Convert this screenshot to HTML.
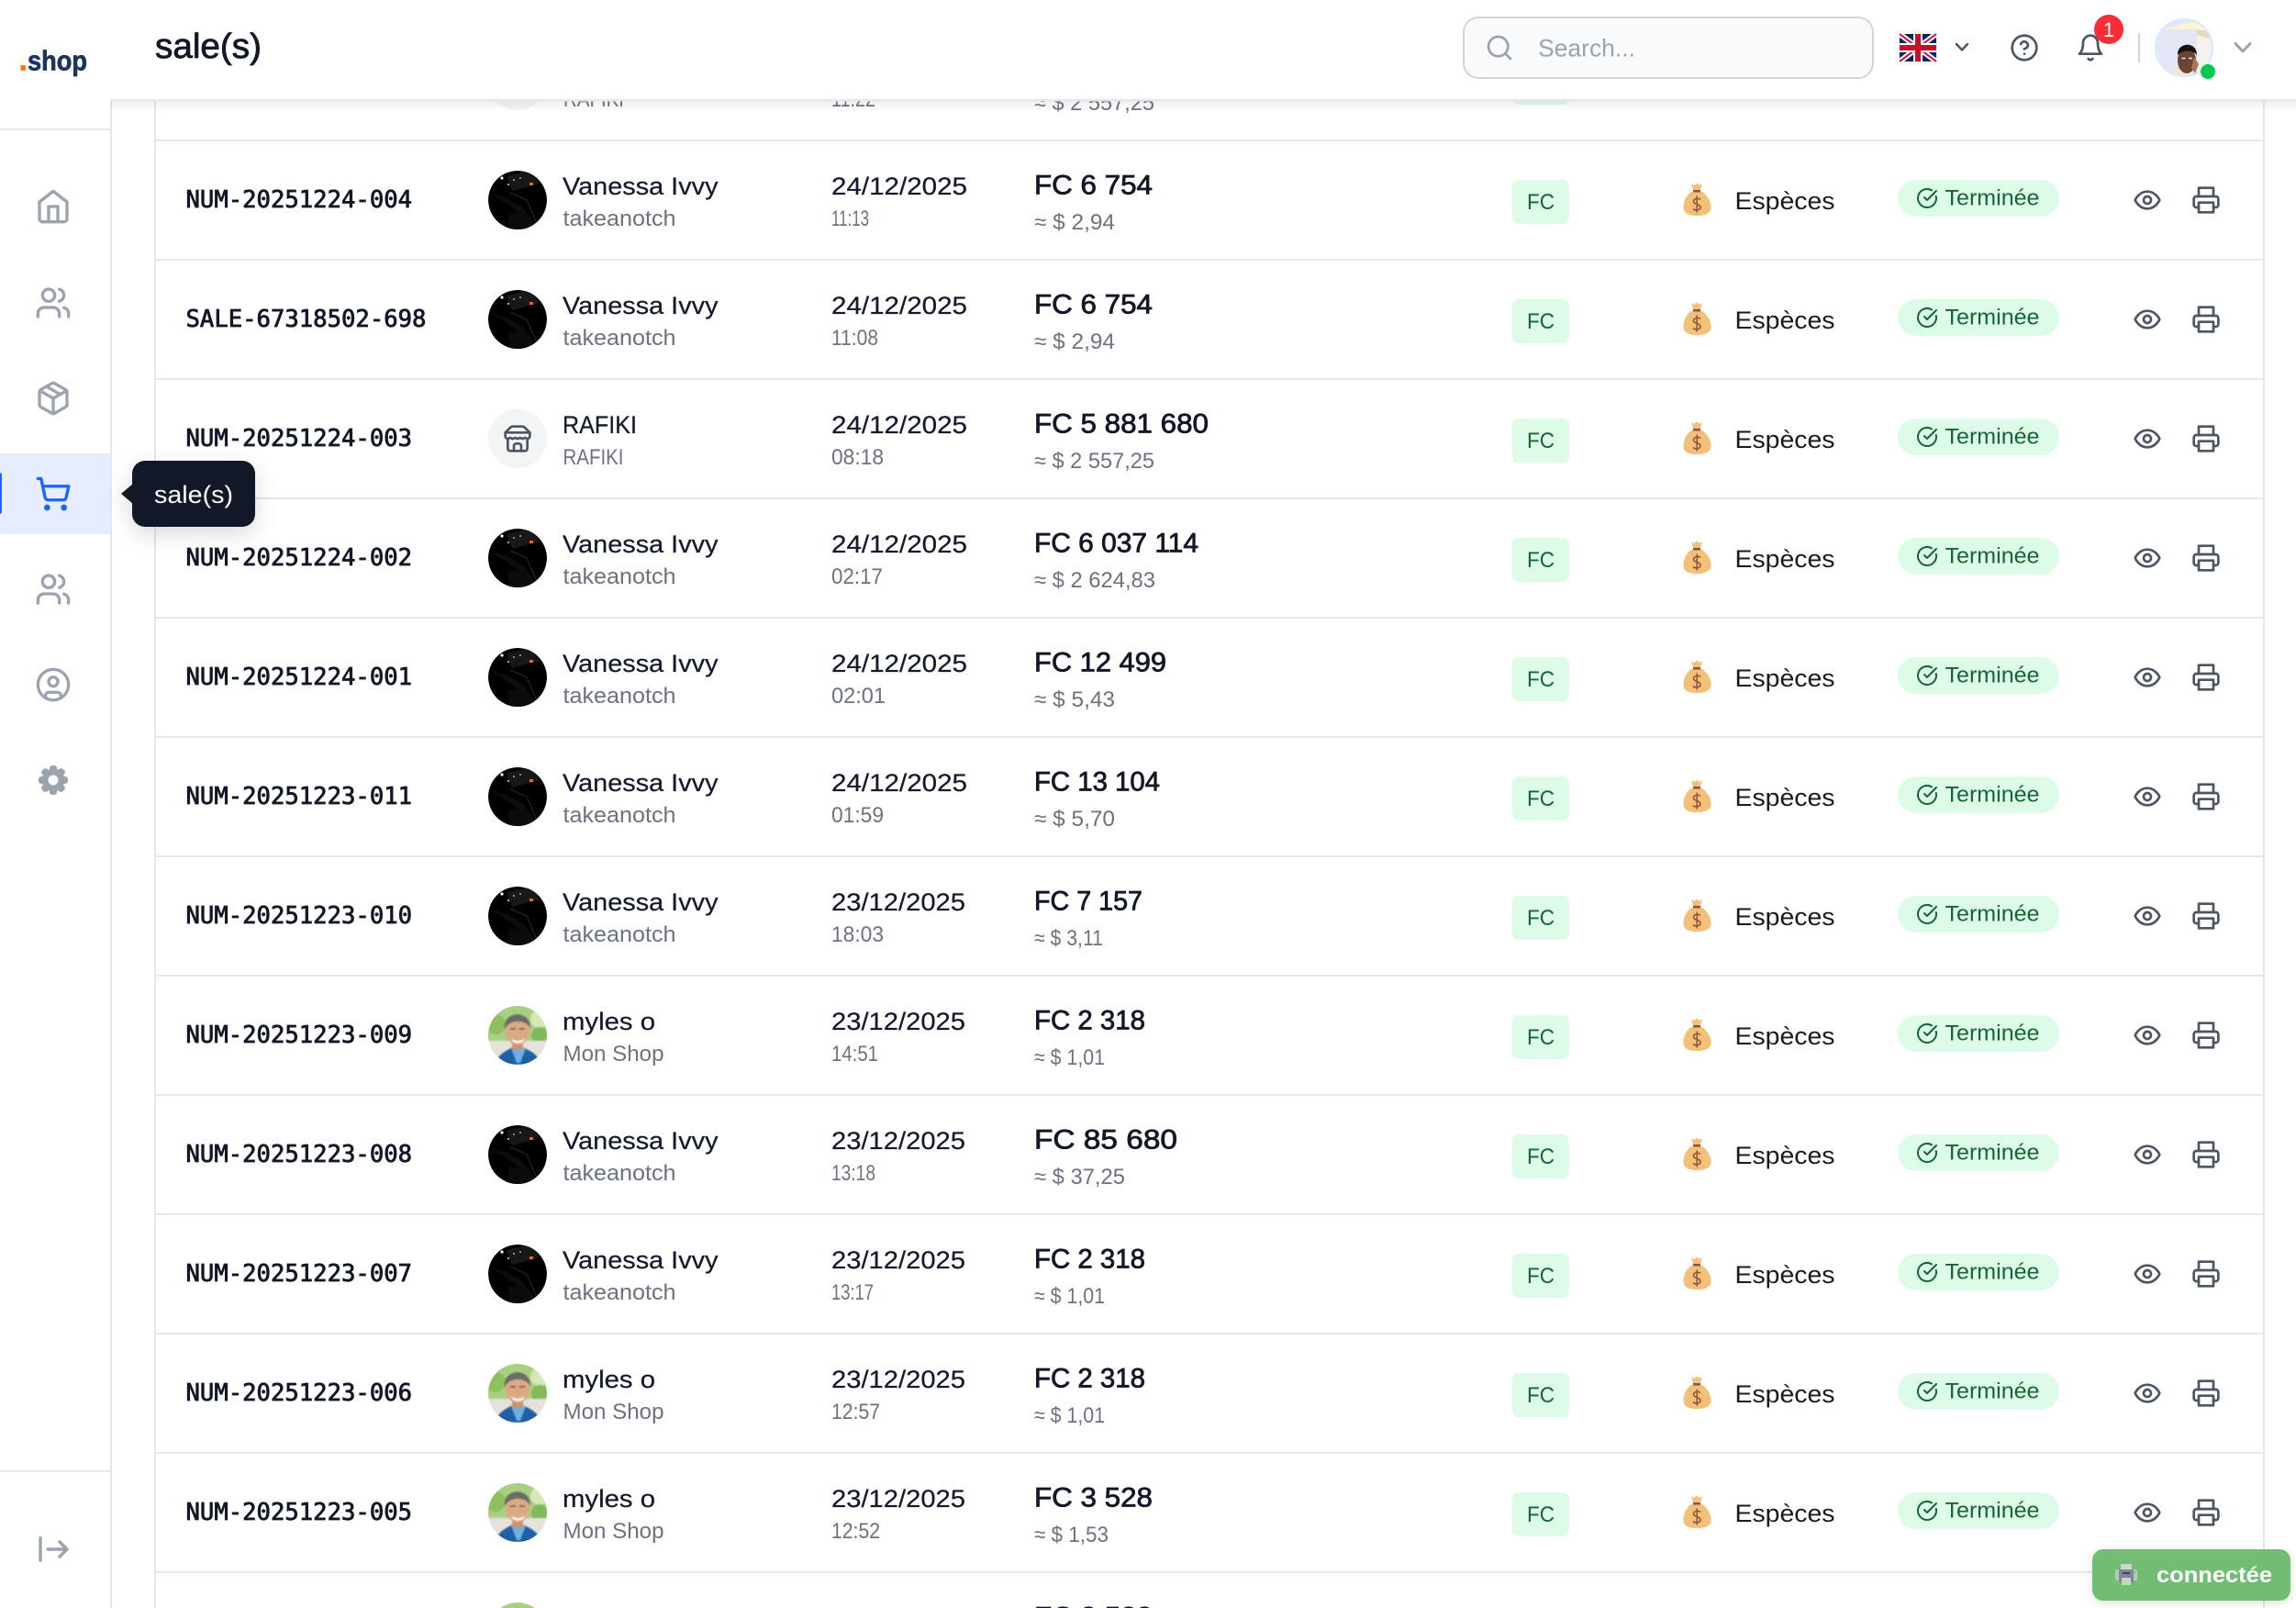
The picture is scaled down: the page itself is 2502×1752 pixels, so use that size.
<!DOCTYPE html>
<html lang="fr"><head><meta charset="utf-8"><title>sale(s)</title>
<style>
html,body{margin:0;padding:0;background:#fff;width:2502px;height:1752px;overflow:hidden}
svg{display:block}
text{font-family:"Liberation Sans",Arial,sans-serif;white-space:pre}
.id{font-family:"DejaVu Sans Mono","Liberation Mono",monospace;font-size:25.6px;fill:#111827;stroke:#111827;stroke-width:.8px}
.n{font-size:27px;fill:#141b2c;stroke:#141b2c;stroke-width:.25px}
.s{font-size:24px;fill:#6b7280}
.a{font-size:30px;fill:#111827;stroke:#111827;stroke-width:.8px}
.fc{font-size:24px;fill:#166534}
.e{font-size:27px;fill:#1a1a1a}
.t{font-size:24px;fill:#166534}
.ln{stroke-linecap:round;stroke-linejoin:round;fill:none}
</style></head><body>
<svg xmlns="http://www.w3.org/2000/svg" width="2502" height="1752" viewBox="0 0 2502 1752">
<defs>
<linearGradient id="hs" x1="0" y1="0" x2="0" y2="1"><stop offset="0" stop-color="#000" stop-opacity=".06"/><stop offset="1" stop-color="#000" stop-opacity="0"/></linearGradient>
<clipPath id="c32"><circle cx="0" cy="0" r="32"/></clipPath>
<clipPath id="cme"><circle cx="2380" cy="52" r="30"/></clipPath>
<g id="eye" class="ln" stroke="#4b5563" stroke-width="2"><path d="M2 12s3-7 10-7 10 7 10 7-3 7-10 7-10-7-10-7Z"/><circle cx="12" cy="12" r="3"/></g>
<g id="prn" class="ln" stroke="#4b5563" stroke-width="2"><path d="M6 9V2h12v7"/><path d="M6 18H4a2 2 0 0 1-2-2v-5a2 2 0 0 1 2-2h16a2 2 0 0 1 2 2v5a2 2 0 0 1-2 2h-2"/><rect x="6" y="14" width="12" height="8"/></g>
<g id="users" class="ln" stroke="#9ca3af" stroke-width="2"><path d="M16 21v-2a4 4 0 0 0-4-4H6a4 4 0 0 0-4 4v2"/><circle cx="9" cy="7" r="4"/><path d="M22 21v-2a4 4 0 0 0-3-3.87"/><path d="M16 3.13a4 4 0 0 1 0 7.75"/></g>
<g id="av-v" clip-path="url(#c32)">
<circle r="32" fill="#000"/>
<path d="M-30 -8L-12 -2L6 8L20 28L24 32L6 32L2 14L-12 4Z" fill="#0d0d0e"/>
<path d="M-12 -26L14 -32L24 -18L-6 -10Z" fill="#18181b"/>
<rect x="-10" y="14" width="20" height="18" fill="#0b0b0d"/>
<circle cx="-17" cy="-24" r="1.600" fill="#fff"/><circle cx="-10" cy="-17" r="1" fill="#ddd"/><circle cx="-4" cy="-22" r="1" fill="#aaa"/><circle cx="3" cy="-24" r="1" fill="#aaa"/>
<rect x="13" y="-19" width="4" height="3" fill="#f5610c"/>
<path d="M-8 -8L10 0L22 28" stroke="#2b2b2e" stroke-width="1" fill="none"/>
</g>
<g id="av-m" clip-path="url(#c32)"><g style="filter:blur(.7px)">
<circle r="33" fill="#a8cf82"/>
<circle cx="-24" cy="-12" r="11" fill="#8fc05f"/>
<circle cx="24" cy="-18" r="10" fill="#d5e8b8"/>
<circle cx="24" cy="0" r="9" fill="#82b95c"/>
<rect x="-32" y="6" width="64" height="26" fill="#e4e2da"/>
<path d="M-24 32C-22 21 -13 17 -5 13L5 13C14 17 22 20 26 32Z" fill="#1f5fa5"/>
<path d="M-7 14L-1 30L3 30L9 14Z" fill="#6cb0e0"/>
<rect x="-6" y="4" width="12" height="12" fill="#c99474"/>
<ellipse cx="0" cy="-5" rx="13" ry="15.500" fill="#dba985"/>
<path d="M-14 -7C-17 -27 15 -29 14 -7C11 -17 -8 -19 -14 -7Z" fill="#6c6c66"/>
<path d="M-8 -7H-2M2 -7H8" stroke="#6a4a38" stroke-width="1.300"/>
<path d="M-7 3C-3 7 4 7 8 3L6 7C3 9 -2 9 -5 7Z" fill="#fff"/>
</g></g>
<g id="av-s"><circle r="32" fill="#f3f4f6"/><g transform="translate(-16,-16) scale(1.333)" class="ln" stroke="#4b5563" stroke-width="2"><path d="m2 7 4.41-4.41A2 2 0 0 1 7.83 2h8.34a2 2 0 0 1 1.42.59L22 7"/><path d="M4 12v8a2 2 0 0 0 2 2h12a2 2 0 0 0 2-2v-8"/><path d="M15 22v-4a2 2 0 0 0-2-2h-2a2 2 0 0 0-2 2v4"/><path d="M2 7h20"/><path d="M22 7v3a2 2 0 0 1-2 2a2.7 2.7 0 0 1-1.59-.63.7.7 0 0 0-.82 0A2.7 2.7 0 0 1 16 12a2.7 2.7 0 0 1-1.59-.63.7.7 0 0 0-.82 0A2.7 2.7 0 0 1 12 12a2.7 2.7 0 0 1-1.59-.63.7.7 0 0 0-.82 0A2.7 2.7 0 0 1 8 12a2.7 2.7 0 0 1-1.59-.63.7.7 0 0 0-.82 0A2.7 2.7 0 0 1 4 12a2 2 0 0 1-2-2V7"/></g></g>
<g id="cells">
<rect x="1648" y="43" width="62" height="48" rx="7" fill="#dcfce7"/>
<path d="M1843 56C1836 61 1834.500 68 1834.500 73C1834.500 79 1839 82 1849 82C1859 82 1864.500 79 1864.500 73C1864.500 68 1862 61 1855 56Z" fill="#f4bf77"/>
<path d="M1843 47L1846 49L1849 46.500L1852 49L1855 47L1853 54L1845 54Z" fill="#f4bf77"/>
<rect x="1845" y="54" width="8" height="2.500" fill="#8a5540"/>
<path d="M1853 64.500C1851.500 62.800 1845.500 62.800 1845.500 66.500C1845.500 70 1853 69 1853 73C1853 76.500 1846.500 76.500 1845 74.500M1849.200 60.500V78.500" fill="none" stroke="#8a5540" stroke-width="1.500"/>
<rect x="2068" y="43" width="176" height="40" rx="20" fill="#dcfce7"/>
<g transform="translate(2088,51)" class="ln" stroke="#166534" stroke-width="2"><path d="M21.801 10A10 10 0 1 1 17 3.335"/><path d="m9 11 3 3L22 4"/></g>
<use href="#eye" transform="translate(2324,49) scale(1.333)"/>
<use href="#prn" transform="translate(2388,49) scale(1.333)"/>
</g>
</defs>

<rect width="2502" height="1752" fill="#fff"/>

<!-- table frame -->
<rect x="168" y="100" width="2" height="1652" fill="#e5e7eb"/>
<rect x="2466" y="100" width="2" height="1652" fill="#e5e7eb"/>
<g fill="#e5e7eb">
<rect x="170" y="152" width="2296" height="2"/><rect x="170" y="282" width="2296" height="2"/><rect x="170" y="412" width="2296" height="2"/><rect x="170" y="542" width="2296" height="2"/><rect x="170" y="672" width="2296" height="2"/><rect x="170" y="802" width="2296" height="2"/><rect x="170" y="932" width="2296" height="2"/><rect x="170" y="1062" width="2296" height="2"/><rect x="170" y="1192" width="2296" height="2"/><rect x="170" y="1322" width="2296" height="2"/><rect x="170" y="1452" width="2296" height="2"/><rect x="170" y="1582" width="2296" height="2"/><rect x="170" y="1712" width="2296" height="2"/>
</g>

<!-- rows -->
<g transform="translate(0,23)"><use href="#av-s" x="564" y="65"/><text class="s" x="614" y="93" textLength="66" lengthAdjust="spacingAndGlyphs">RAFIKI</text><text class="s" x="906" y="93" textLength="48" lengthAdjust="spacingAndGlyphs">11:22</text><text class="s" x="1127" y="97" textLength="131" lengthAdjust="spacingAndGlyphs">≈ $ 2 557,25</text><use href="#cells"/></g>

<g transform="translate(0,153)"><text class="id" x="202.500" y="73">NUM-20251224-004</text><use href="#av-v" x="564" y="65"/><text class="n" x="613" y="59" textLength="169.500" lengthAdjust="spacingAndGlyphs">Vanessa Ivvy</text><text class="s" x="613.500" y="93" textLength="123" lengthAdjust="spacingAndGlyphs">takeanotch</text><text class="n" x="906" y="59" textLength="148" lengthAdjust="spacingAndGlyphs">24/12/2025</text><text class="s" x="906" y="93" textLength="41" lengthAdjust="spacingAndGlyphs">11:13</text><text class="a" x="1127" y="58.500" textLength="129" lengthAdjust="spacingAndGlyphs">FC 6 754</text><text class="s" x="1127" y="97" textLength="88" lengthAdjust="spacingAndGlyphs">≈ $ 2,94</text><use href="#cells"/><text class="fc" x="1664" y="75" textLength="30" lengthAdjust="spacingAndGlyphs">FC</text><text class="e" x="1890.500" y="75" textLength="109" lengthAdjust="spacingAndGlyphs">Espèces</text><text class="t" x="2119.500" y="70.500" textLength="103" lengthAdjust="spacingAndGlyphs">Terminée</text></g>

<g transform="translate(0,283)"><text class="id" x="202.500" y="73">SALE-67318502-698</text><use href="#av-v" x="564" y="65"/><text class="n" x="613" y="59" textLength="169.500" lengthAdjust="spacingAndGlyphs">Vanessa Ivvy</text><text class="s" x="613.500" y="93" textLength="123" lengthAdjust="spacingAndGlyphs">takeanotch</text><text class="n" x="906" y="59" textLength="148" lengthAdjust="spacingAndGlyphs">24/12/2025</text><text class="s" x="906" y="93" textLength="51" lengthAdjust="spacingAndGlyphs">11:08</text><text class="a" x="1127" y="58.500" textLength="129" lengthAdjust="spacingAndGlyphs">FC 6 754</text><text class="s" x="1127" y="97" textLength="88" lengthAdjust="spacingAndGlyphs">≈ $ 2,94</text><use href="#cells"/><text class="fc" x="1664" y="75" textLength="30" lengthAdjust="spacingAndGlyphs">FC</text><text class="e" x="1890.500" y="75" textLength="109" lengthAdjust="spacingAndGlyphs">Espèces</text><text class="t" x="2119.500" y="70.500" textLength="103" lengthAdjust="spacingAndGlyphs">Terminée</text></g>

<g transform="translate(0,413)"><text class="id" x="202.500" y="73">NUM-20251224-003</text><use href="#av-s" x="564" y="65"/><text class="n" x="613" y="59" textLength="81" lengthAdjust="spacingAndGlyphs">RAFIKI</text><text class="s" x="613.500" y="93" textLength="66" lengthAdjust="spacingAndGlyphs">RAFIKI</text><text class="n" x="906" y="59" textLength="148" lengthAdjust="spacingAndGlyphs">24/12/2025</text><text class="s" x="906" y="93" textLength="57" lengthAdjust="spacingAndGlyphs">08:18</text><text class="a" x="1127" y="58.500" textLength="190" lengthAdjust="spacingAndGlyphs">FC 5 881 680</text><text class="s" x="1127" y="97" textLength="131" lengthAdjust="spacingAndGlyphs">≈ $ 2 557,25</text><use href="#cells"/><text class="fc" x="1664" y="75" textLength="30" lengthAdjust="spacingAndGlyphs">FC</text><text class="e" x="1890.500" y="75" textLength="109" lengthAdjust="spacingAndGlyphs">Espèces</text><text class="t" x="2119.500" y="70.500" textLength="103" lengthAdjust="spacingAndGlyphs">Terminée</text></g>

<g transform="translate(0,543)"><text class="id" x="202.500" y="73">NUM-20251224-002</text><use href="#av-v" x="564" y="65"/><text class="n" x="613" y="59" textLength="169.500" lengthAdjust="spacingAndGlyphs">Vanessa Ivvy</text><text class="s" x="613.500" y="93" textLength="123" lengthAdjust="spacingAndGlyphs">takeanotch</text><text class="n" x="906" y="59" textLength="148" lengthAdjust="spacingAndGlyphs">24/12/2025</text><text class="s" x="906" y="93" textLength="56" lengthAdjust="spacingAndGlyphs">02:17</text><text class="a" x="1127" y="58.500" textLength="179" lengthAdjust="spacingAndGlyphs">FC 6 037 114</text><text class="s" x="1127" y="97" textLength="132" lengthAdjust="spacingAndGlyphs">≈ $ 2 624,83</text><use href="#cells"/><text class="fc" x="1664" y="75" textLength="30" lengthAdjust="spacingAndGlyphs">FC</text><text class="e" x="1890.500" y="75" textLength="109" lengthAdjust="spacingAndGlyphs">Espèces</text><text class="t" x="2119.500" y="70.500" textLength="103" lengthAdjust="spacingAndGlyphs">Terminée</text></g>

<g transform="translate(0,673)"><text class="id" x="202.500" y="73">NUM-20251224-001</text><use href="#av-v" x="564" y="65"/><text class="n" x="613" y="59" textLength="169.500" lengthAdjust="spacingAndGlyphs">Vanessa Ivvy</text><text class="s" x="613.500" y="93" textLength="123" lengthAdjust="spacingAndGlyphs">takeanotch</text><text class="n" x="906" y="59" textLength="148" lengthAdjust="spacingAndGlyphs">24/12/2025</text><text class="s" x="906" y="93" textLength="59" lengthAdjust="spacingAndGlyphs">02:01</text><text class="a" x="1127" y="58.500" textLength="144" lengthAdjust="spacingAndGlyphs">FC 12 499</text><text class="s" x="1127" y="97" textLength="88" lengthAdjust="spacingAndGlyphs">≈ $ 5,43</text><use href="#cells"/><text class="fc" x="1664" y="75" textLength="30" lengthAdjust="spacingAndGlyphs">FC</text><text class="e" x="1890.500" y="75" textLength="109" lengthAdjust="spacingAndGlyphs">Espèces</text><text class="t" x="2119.500" y="70.500" textLength="103" lengthAdjust="spacingAndGlyphs">Terminée</text></g>

<g transform="translate(0,803)"><text class="id" x="202.500" y="73">NUM-20251223-011</text><use href="#av-v" x="564" y="65"/><text class="n" x="613" y="59" textLength="169.500" lengthAdjust="spacingAndGlyphs">Vanessa Ivvy</text><text class="s" x="613.500" y="93" textLength="123" lengthAdjust="spacingAndGlyphs">takeanotch</text><text class="n" x="906" y="59" textLength="148" lengthAdjust="spacingAndGlyphs">24/12/2025</text><text class="s" x="906" y="93" textLength="57" lengthAdjust="spacingAndGlyphs">01:59</text><text class="a" x="1127" y="58.500" textLength="137" lengthAdjust="spacingAndGlyphs">FC 13 104</text><text class="s" x="1127" y="97" textLength="88" lengthAdjust="spacingAndGlyphs">≈ $ 5,70</text><use href="#cells"/><text class="fc" x="1664" y="75" textLength="30" lengthAdjust="spacingAndGlyphs">FC</text><text class="e" x="1890.500" y="75" textLength="109" lengthAdjust="spacingAndGlyphs">Espèces</text><text class="t" x="2119.500" y="70.500" textLength="103" lengthAdjust="spacingAndGlyphs">Terminée</text></g>

<g transform="translate(0,933)"><text class="id" x="202.500" y="73">NUM-20251223-010</text><use href="#av-v" x="564" y="65"/><text class="n" x="613" y="59" textLength="169.500" lengthAdjust="spacingAndGlyphs">Vanessa Ivvy</text><text class="s" x="613.500" y="93" textLength="123" lengthAdjust="spacingAndGlyphs">takeanotch</text><text class="n" x="906" y="59" textLength="146" lengthAdjust="spacingAndGlyphs">23/12/2025</text><text class="s" x="906" y="93" textLength="57" lengthAdjust="spacingAndGlyphs">18:03</text><text class="a" x="1127" y="58.500" textLength="118" lengthAdjust="spacingAndGlyphs">FC 7 157</text><text class="s" x="1127" y="97" textLength="75" lengthAdjust="spacingAndGlyphs">≈ $ 3,11</text><use href="#cells"/><text class="fc" x="1664" y="75" textLength="30" lengthAdjust="spacingAndGlyphs">FC</text><text class="e" x="1890.500" y="75" textLength="109" lengthAdjust="spacingAndGlyphs">Espèces</text><text class="t" x="2119.500" y="70.500" textLength="103" lengthAdjust="spacingAndGlyphs">Terminée</text></g>

<g transform="translate(0,1063)"><text class="id" x="202.500" y="73">NUM-20251223-009</text><use href="#av-m" x="564" y="65"/><text class="n" x="613" y="59" textLength="101" lengthAdjust="spacingAndGlyphs">myles o</text><text class="s" x="613.500" y="93" textLength="110" lengthAdjust="spacingAndGlyphs">Mon Shop</text><text class="n" x="906" y="59" textLength="146" lengthAdjust="spacingAndGlyphs">23/12/2025</text><text class="s" x="906" y="93" textLength="51" lengthAdjust="spacingAndGlyphs">14:51</text><text class="a" x="1127" y="58.500" textLength="121" lengthAdjust="spacingAndGlyphs">FC 2 318</text><text class="s" x="1127" y="97" textLength="77" lengthAdjust="spacingAndGlyphs">≈ $ 1,01</text><use href="#cells"/><text class="fc" x="1664" y="75" textLength="30" lengthAdjust="spacingAndGlyphs">FC</text><text class="e" x="1890.500" y="75" textLength="109" lengthAdjust="spacingAndGlyphs">Espèces</text><text class="t" x="2119.500" y="70.500" textLength="103" lengthAdjust="spacingAndGlyphs">Terminée</text></g>

<g transform="translate(0,1193)"><text class="id" x="202.500" y="73">NUM-20251223-008</text><use href="#av-v" x="564" y="65"/><text class="n" x="613" y="59" textLength="169.500" lengthAdjust="spacingAndGlyphs">Vanessa Ivvy</text><text class="s" x="613.500" y="93" textLength="123" lengthAdjust="spacingAndGlyphs">takeanotch</text><text class="n" x="906" y="59" textLength="146" lengthAdjust="spacingAndGlyphs">23/12/2025</text><text class="s" x="906" y="93" textLength="48" lengthAdjust="spacingAndGlyphs">13:18</text><text class="a" x="1127" y="58.500" textLength="156" lengthAdjust="spacingAndGlyphs">FC 85 680</text><text class="s" x="1127" y="97" textLength="99" lengthAdjust="spacingAndGlyphs">≈ $ 37,25</text><use href="#cells"/><text class="fc" x="1664" y="75" textLength="30" lengthAdjust="spacingAndGlyphs">FC</text><text class="e" x="1890.500" y="75" textLength="109" lengthAdjust="spacingAndGlyphs">Espèces</text><text class="t" x="2119.500" y="70.500" textLength="103" lengthAdjust="spacingAndGlyphs">Terminée</text></g>

<g transform="translate(0,1323)"><text class="id" x="202.500" y="73">NUM-20251223-007</text><use href="#av-v" x="564" y="65"/><text class="n" x="613" y="59" textLength="169.500" lengthAdjust="spacingAndGlyphs">Vanessa Ivvy</text><text class="s" x="613.500" y="93" textLength="123" lengthAdjust="spacingAndGlyphs">takeanotch</text><text class="n" x="906" y="59" textLength="146" lengthAdjust="spacingAndGlyphs">23/12/2025</text><text class="s" x="906" y="93" textLength="46" lengthAdjust="spacingAndGlyphs">13:17</text><text class="a" x="1127" y="58.500" textLength="121" lengthAdjust="spacingAndGlyphs">FC 2 318</text><text class="s" x="1127" y="97" textLength="77" lengthAdjust="spacingAndGlyphs">≈ $ 1,01</text><use href="#cells"/><text class="fc" x="1664" y="75" textLength="30" lengthAdjust="spacingAndGlyphs">FC</text><text class="e" x="1890.500" y="75" textLength="109" lengthAdjust="spacingAndGlyphs">Espèces</text><text class="t" x="2119.500" y="70.500" textLength="103" lengthAdjust="spacingAndGlyphs">Terminée</text></g>

<g transform="translate(0,1453)"><text class="id" x="202.500" y="73">NUM-20251223-006</text><use href="#av-m" x="564" y="65"/><text class="n" x="613" y="59" textLength="101" lengthAdjust="spacingAndGlyphs">myles o</text><text class="s" x="613.500" y="93" textLength="110" lengthAdjust="spacingAndGlyphs">Mon Shop</text><text class="n" x="906" y="59" textLength="146" lengthAdjust="spacingAndGlyphs">23/12/2025</text><text class="s" x="906" y="93" textLength="53" lengthAdjust="spacingAndGlyphs">12:57</text><text class="a" x="1127" y="58.500" textLength="121" lengthAdjust="spacingAndGlyphs">FC 2 318</text><text class="s" x="1127" y="97" textLength="77" lengthAdjust="spacingAndGlyphs">≈ $ 1,01</text><use href="#cells"/><text class="fc" x="1664" y="75" textLength="30" lengthAdjust="spacingAndGlyphs">FC</text><text class="e" x="1890.500" y="75" textLength="109" lengthAdjust="spacingAndGlyphs">Espèces</text><text class="t" x="2119.500" y="70.500" textLength="103" lengthAdjust="spacingAndGlyphs">Terminée</text></g>

<g transform="translate(0,1583)"><text class="id" x="202.500" y="73">NUM-20251223-005</text><use href="#av-m" x="564" y="65"/><text class="n" x="613" y="59" textLength="101" lengthAdjust="spacingAndGlyphs">myles o</text><text class="s" x="613.500" y="93" textLength="110" lengthAdjust="spacingAndGlyphs">Mon Shop</text><text class="n" x="906" y="59" textLength="146" lengthAdjust="spacingAndGlyphs">23/12/2025</text><text class="s" x="906" y="93" textLength="53" lengthAdjust="spacingAndGlyphs">12:52</text><text class="a" x="1127" y="58.500" textLength="129" lengthAdjust="spacingAndGlyphs">FC 3 528</text><text class="s" x="1127" y="97" textLength="81" lengthAdjust="spacingAndGlyphs">≈ $ 1,53</text><use href="#cells"/><text class="fc" x="1664" y="75" textLength="30" lengthAdjust="spacingAndGlyphs">FC</text><text class="e" x="1890.500" y="75" textLength="109" lengthAdjust="spacingAndGlyphs">Espèces</text><text class="t" x="2119.500" y="70.500" textLength="103" lengthAdjust="spacingAndGlyphs">Terminée</text></g>

<g transform="translate(0,1713)"><use href="#av-m" x="564" y="65"/><text class="n" x="906" y="59" textLength="146" lengthAdjust="spacingAndGlyphs">23/12/2025</text><text class="a" x="1127" y="58.500" textLength="129" lengthAdjust="spacingAndGlyphs">FC 3 528</text></g>

<!-- sidebar -->
<rect x="0" y="0" width="120" height="1752" fill="#fff"/>
<rect x="120" y="108" width="2" height="1644" fill="#e5e7eb"/>
<rect x="0" y="140" width="120" height="2" fill="#e5e7eb"/>
<rect x="0" y="1602" width="120" height="2" fill="#e5e7eb"/>
<g transform="translate(38,205) scale(1.667)" class="ln" stroke="#9ca3af" stroke-width="2"><path d="m3 9 9-7 9 7v11a2 2 0 0 1-2 2H5a2 2 0 0 1-2-2z"/><path d="M9 22V12h6v10"/></g>
<use href="#users" transform="translate(38,310) scale(1.667)"/>
<g transform="translate(38,414) scale(1.667)" class="ln" stroke="#9ca3af" stroke-width="2"><path d="M16.500 9.400 7.550 4.240"/><path d="M21 16V8a2 2 0 0 0-1-1.730l-7-4a2 2 0 0 0-2 0l-7 4A2 2 0 0 0 3 8v8a2 2 0 0 0 1 1.730l7 4a2 2 0 0 0 2 0l7-4A2 2 0 0 0 21 16z"/><path d="M3.290 7 12 12 20.710 7"/><path d="M12 22V12"/></g>
<rect x="0" y="494" width="120" height="88" fill="#e5edff"/>
<rect x="-3" y="515" width="5" height="45" rx="2.500" fill="#1d63ff"/>
<g transform="translate(38,518) scale(1.667)" class="ln" stroke="#1d63ff" stroke-width="2"><circle cx="8" cy="21" r="1"/><circle cx="19" cy="21" r="1"/><path d="M2.050 2.050h2l2.660 12.420a2 2 0 0 0 2 1.580h9.780a2 2 0 0 0 1.950-1.570l1.650-7.430H5.120"/></g>
<use href="#users" transform="translate(38,622) scale(1.667)"/>
<g transform="translate(38,726) scale(1.667)" class="ln" stroke="#9ca3af" stroke-width="2"><circle cx="12" cy="12" r="10"/><circle cx="12" cy="10" r="3"/><path d="M7 20.662V19a2 2 0 0 1 2-2h6a2 2 0 0 1 2 2v1.662"/></g>
<g transform="translate(58,850)" fill="#9ca3af"><circle r="12.500"/><rect x="-4" y="-16" width="8" height="32" rx="3"/><rect x="-4" y="-16" width="8" height="32" rx="3" transform="rotate(45)"/><rect x="-4" y="-16" width="8" height="32" rx="3" transform="rotate(90)"/><rect x="-4" y="-16" width="8" height="32" rx="3" transform="rotate(135)"/><circle r="5.500" fill="#fff"/></g>
<g class="ln" stroke="#9ca3af" stroke-width="3.400"><path d="M44 1675.700V1700"/><path d="M52 1688H72"/><path d="M65 1680L73 1688L65 1696"/></g>

<!-- header -->
<rect x="120" y="110" width="2382" height="12" fill="url(#hs)"/>
<rect x="0" y="0" width="2502" height="108" fill="#fff"/>
<rect x="120" y="108" width="2382" height="2.500" fill="#e5e7eb"/>
<rect x="0" y="0" width="120" height="140" fill="#fff"/>
<text x="20.500" y="76.500" style="font-size:34px;font-weight:700;fill:#f97316;stroke:#f97316;stroke-width:.6px">.</text>
<text x="30" y="76.500" textLength="65" lengthAdjust="spacingAndGlyphs" style="font-size:31px;font-weight:700;fill:#1d3461;stroke:#1d3461;stroke-width:.7px">shop</text>
<text x="169" y="63" textLength="116" lengthAdjust="spacingAndGlyphs" style="font-size:38.400px;fill:#111827;stroke:#111827;stroke-width:.8px">sale(s)</text>

<rect x="1595" y="19" width="446" height="66" rx="16" fill="#f9fafb" stroke="#d1d5db" stroke-width="2"/>
<g transform="translate(1618,36) scale(1.333)" class="ln" stroke="#9ca3af" stroke-width="2"><circle cx="11" cy="11" r="8"/><path d="m21 21-4.350-4.350"/></g>
<text x="1676" y="61.500" textLength="106" lengthAdjust="spacingAndGlyphs" style="font-size:27px;fill:#9ca3af">Search...</text>

<g transform="translate(2070,37)">
<rect width="40" height="30" fill="#012169"/>
<path d="M0 0L40 30M40 0L0 30" stroke="#fff" stroke-width="6"/>
<path d="M0 0L40 30M40 0L0 30" stroke="#c8102e" stroke-width="2"/>
<path d="M20 0V30M0 15H40" stroke="#fff" stroke-width="10"/>
<path d="M20 0V30M0 15H40" stroke="#c8102e" stroke-width="6"/>
</g>
<path d="M2132 48L2138 54.500L2144 48" class="ln" stroke="#4b5563" stroke-width="2.400"/>
<g transform="translate(2190,36) scale(1.333)" class="ln" stroke="#4b5563" stroke-width="2"><circle cx="12" cy="12" r="10"/><path d="M9.090 9a3 3 0 0 1 5.830 1c0 2-3 3-3 3"/><path d="M12 17h.01"/></g>
<g transform="translate(2262,36) scale(1.333)" class="ln" stroke="#4b5563" stroke-width="2"><path d="M6 8a6 6 0 0 1 12 0c0 7 3 9 3 9H3s3-2 3-9"/><path d="M10.300 21a1.940 1.940 0 0 0 3.400 0"/></g>
<circle cx="2298" cy="32" r="16" fill="#fb2c36"/>
<text x="2298" y="40" text-anchor="middle" style="font-size:22px;fill:#fff">1</text>
<rect x="2330" y="36" width="2" height="32" fill="#d1d5db"/>
<g clip-path="url(#cme)">
<rect x="2348" y="20" width="64" height="64" fill="#e3e7f5"/>
<path d="M2358 32L2404 20L2412 20L2412 36L2394 32Z" fill="#fdf5cf"/>
<rect x="2394" y="33" width="18" height="50" fill="#f4f2ee"/>
<path d="M2394 33H2408V42L2394 38Z" fill="#e5d9bd"/>
<path d="M2358 84C2360 74 2370 72 2382 72C2392 72 2396 76 2398 84Z" fill="#efe6da"/>
<ellipse cx="2383" cy="66" rx="10" ry="14" fill="#6a4534"/>
<path d="M2373 60C2372 46 2394 44 2394 60C2390 54 2378 54 2373 60Z" fill="#17120f"/>
<path d="M2377.500 63.500h4M2385 63.500h4" stroke="#efe6da" stroke-width="1.500"/>
<path d="M2391 62L2396 70L2392 80L2388 74Z" fill="#a5785b"/>
</g>
<circle cx="2380" cy="52" r="31" fill="none" stroke="#dbeafe" stroke-width="2.500"/>
<circle cx="2406" cy="78" r="8" fill="#00c950"/>
<path d="M2436 47.500L2444 56L2452 47.500" class="ln" stroke="#9ca3af" stroke-width="3"/>

<!-- tooltip -->
<g style="filter:drop-shadow(0 8px 12px rgba(0,0,0,.14))">
<path d="M145 527L132 538L145 549Z" fill="#111827"/>
<rect x="144" y="502" width="134" height="72" rx="14" fill="#111827"/>
</g>
<text x="168" y="548" textLength="86" lengthAdjust="spacingAndGlyphs" style="font-size:27px;fill:#fff">sale(s)</text>

<!-- connected badge -->
<rect x="2280" y="1688" width="216" height="56" rx="12" fill="#6abb6e" fill-opacity=".95" style="filter:drop-shadow(0 3px 5px rgba(0,0,0,.12))"/>
<g>
<rect x="2305" y="1710" width="24" height="12" rx="2" fill="#b5ceb0"/>
<rect x="2311" y="1704" width="12" height="8" fill="#c8d8c5"/>
<rect x="2309" y="1710" width="16" height="14" rx="1" fill="#7d859e"/>
<rect x="2312" y="1719" width="10" height="8" fill="#c8d4bb"/>
<rect x="2313" y="1713" width="8" height="2" fill="#3d4458"/>
<circle cx="2327" cy="1713" r="1" fill="#ef6a8a"/>
</g>
<text x="2350" y="1724" textLength="126" lengthAdjust="spacingAndGlyphs" style="font-size:24px;font-weight:700;fill:#fff">connectée</text>
</svg>
</body></html>
